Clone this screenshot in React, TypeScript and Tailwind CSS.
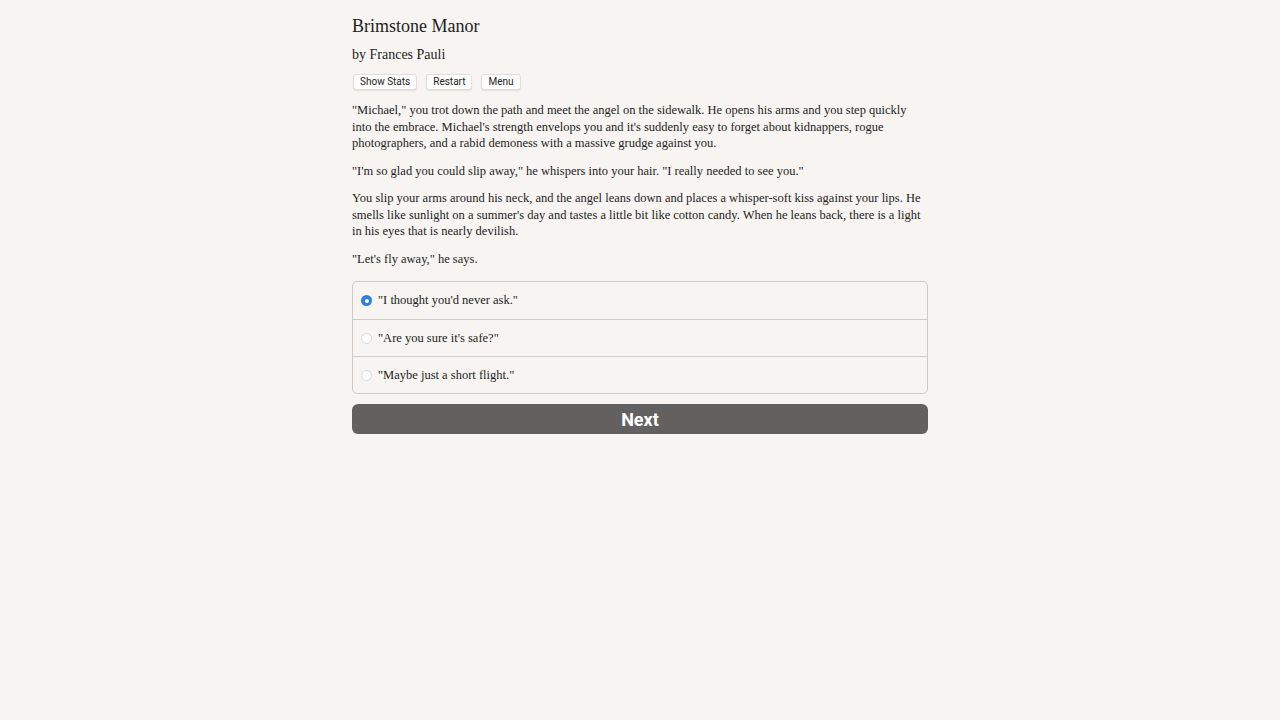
import * as React from 'react';

const serif = { fontFamily: '"Book Antiqua", Palatino, "Liberation Serif", serif' };

const choices = ['"I thought you\'d never ask."', '"Are you sure it\'s safe?"', '"Maybe just a short flight."'];

export default function App() {
    const [selected, setSelected] = React.useState(0);

    return (
        <div className="min-h-screen w-full bg-[#f7f4f1] text-[#1e1e1e]" style={serif}>
            <div className="mx-auto w-[576px] pt-[14px]">
                {/* Header */}
                <h1 className="text-[18px] leading-[24px]">Brimstone Manor</h1>
                <h2 className="mt-[7px] text-[14px] leading-[20px]">by Frances Pauli</h2>
                <div className="mt-[9px] flex gap-[9px] pl-[1px]">
                    {['Show Stats', 'Restart', 'Menu'].map((label) => (
                        <button
                            key={label}
                            className="h-[16px] rounded-[3px] border border-[#e2ddd8] bg-white px-[6px] font-['Roboto',sans-serif] text-[10px] leading-[14px] text-[#222] shadow-[0_1px_1px_rgba(0,0,0,0.08)]"
                        >
                            {label}
                        </button>
                    ))}
                </div>

                {/* Story */}
                <div className="mt-[12px] space-y-[11px] text-[12.5px] leading-[16.5px]">
                    <p>
                        "Michael," you trot down the path and meet the angel on the sidewalk. He opens his arms and you step quickly into the embrace.
                        Michael's strength envelops you and it's suddenly easy to forget about kidnappers, rogue photographers, and a rabid demoness
                        with a massive grudge against you.
                    </p>
                    <p>"I'm so glad you could slip away," he whispers into your hair. "I really needed to see you."</p>
                    <p>
                        You slip your arms around his neck, and the angel leans down and places a whisper-soft kiss against your lips. He smells like
                        sunlight on a summer's day and tastes a little bit like cotton candy. When he leans back, there is a light in his eyes that is
                        nearly devilish.
                    </p>
                    <p>"Let's fly away," he says.</p>
                </div>

                {/* Choices */}
                <div className="mt-[14px] overflow-hidden rounded-[5px] border border-[#cfcac6]">
                    {choices.map((choice, i) => (
                        <label
                            key={choice}
                            className={`flex h-[37px] cursor-pointer items-center gap-[6px] px-[8px] text-[12.5px] ${i > 0 ? 'border-t border-[#cfcac6]' : ''}`}
                        >
                            <span
                                className={`flex h-[11px] w-[11px] items-center justify-center rounded-full ${
                                    selected === i ? 'bg-[#2f7fe0]' : 'border border-[#dcd8d4] bg-white'
                                }`}
                                onClick={() => setSelected(i)}
                            >
                                {selected === i && <span className="h-[4px] w-[4px] rounded-full bg-white" />}
                            </span>
                            <span>{choice}</span>
                        </label>
                    ))}
                </div>

                <button className="mt-[10px] h-[30px] w-full rounded-[6px] bg-[#636160] font-['Roboto',sans-serif] text-[18px] font-bold text-white">
                    Next
                </button>
            </div>
        </div>
    );
}
